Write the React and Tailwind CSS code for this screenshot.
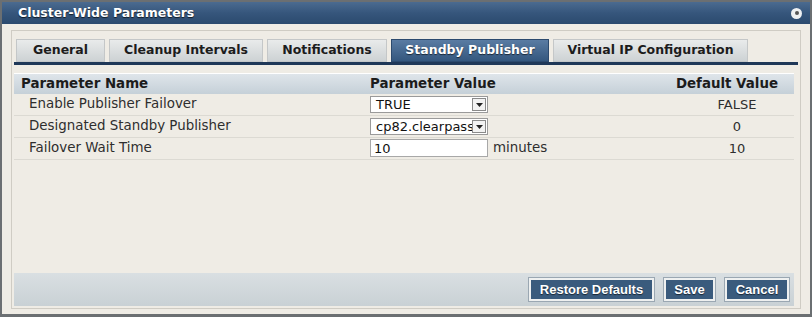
// Cluster-Wide Parameters dialog, Standby Publisher tab

const tabs = [
  { label: "General", w: "w-[89px]" },
  { label: "Cleanup Intervals", w: "w-[154px]" },
  { label: "Notifications", w: "w-[120px]" },
  { label: "Standby Publisher", w: "w-[158px]", active: true },
  { label: "Virtual IP Configuration", w: "w-[195px]" },
];

function SelectBox({ value }) {
  return (
    <div className="flex h-[17px] w-[118px] items-center border border-[#9a9a9a] bg-white">
      <span className="flex-1 overflow-hidden whitespace-nowrap pl-[5px] text-[13px] leading-[15px] text-[#111]">
        {value}
      </span>
      <span className="mr-[1px] flex h-[13px] w-[14px] shrink-0 items-center justify-center border border-[#8a8a8a] bg-[#f2f2f2]">
        <svg width="7" height="4" viewBox="0 0 7 4">
          <path d="M0 0h7L3.5 4z" fill="#222" />
        </svg>
      </span>
    </div>
  );
}

function Row({ name, children, def }) {
  return (
    <div className="flex h-[22px] items-center border-b border-[#dcdad3]">
      <div className="w-[356px] pl-[15px] text-[13.4px] text-[#2e2e2e]">{name}</div>
      <div className="flex w-[310px] items-center">{children}</div>
      <div className="flex-1 text-center text-[13px] text-[#2e2e2e]">{def}</div>
    </div>
  );
}

function DialogButton({ children, w }) {
  return (
    <button
      className={`h-[23px] ${w} border-2 border-[#eef0f0] bg-[#3a5b7d] text-[13px] font-bold text-white shadow-[0_0_0_1px_#9aa7b2] [font-family:'Liberation_Sans',sans-serif] [text-shadow:0_1px_1px_rgba(0,0,0,0.6)]`}
    >
      {children}
    </button>
  );
}

export default function App() {
  return (
    <div className="flex h-[317px] w-[812px] flex-col bg-[#6b6f72] px-[2px] pb-[3px] pt-[2px] [font-family:'DejaVu_Sans',Verdana,sans-serif]">
      {/* title bar */}
      <div className="flex h-[22px] items-center justify-between bg-gradient-to-b from-[#4b6b90] via-[#36567c] to-[#2b4a6e] pl-[16px] pr-[8px]">
        <span className="text-[12.5px] font-bold text-white [text-shadow:0_1px_1px_rgba(0,0,0,0.7)]">
          Cluster-Wide Parameters
        </span>
        <span className="flex h-[11px] w-[11px] items-center justify-center rounded-full bg-[#eef0f2]">
          <span className="h-[4px] w-[4px] rounded-full bg-[#555]" />
        </span>
      </div>

      {/* body */}
      <div className="flex flex-1 flex-col bg-[#efece5] px-[9px] pb-[5px] pt-[6px]">
        <div className="flex flex-1 flex-col border border-[#cfccc4] px-[2px] pt-[8px]">
          {/* tabs */}
          <div className="flex gap-[4px] border-b-[3px] border-[#1f3858] pl-[2px]">
            {tabs.map((t) => (
              <div
                key={t.label}
                className={`flex h-[23px] ${t.w} items-center justify-center border text-[12.5px] font-bold ${
                  t.active
                    ? "border-[#2c4a6e] bg-gradient-to-b from-[#5a7ca3] to-[#34577e] text-white [text-shadow:0_1px_1px_rgba(0,0,0,0.6)]"
                    : "border-[#c4c7c8] bg-gradient-to-b from-[#e9ebeb] to-[#cdd2d4] text-[#1c1c1c]"
                }`}
              >
                {t.label}
              </div>
            ))}
          </div>

          {/* table */}
          <div className="mt-[8px] pr-[4px]">
            <div className="flex h-[21px] items-center border-t border-white bg-gradient-to-b from-[#dfe5ea] to-[#c5d0d8] text-[13.4px] font-bold whitespace-nowrap text-[#1c1c1c]">
              <div className="w-[356px] pl-[7px]">Parameter Name</div>
              <div className="w-[290px]">Parameter Value</div>
              <div className="flex-1 pr-[16px] text-right">Default Value</div>
            </div>
            <Row name="Enable Publisher Failover" def="FALSE">
              <SelectBox value="TRUE" />
            </Row>
            <Row name="Designated Standby Publisher" def="0">
              <SelectBox value="cp82.clearpass" />
            </Row>
            <Row name="Failover Wait Time" def="10">
              <div className="flex h-[18px] w-[118px] items-center border border-[#a8a8a8] bg-white pl-[3px] text-[13px] text-[#111]">
                10
              </div>
              <span className="ml-[5px] text-[13.4px] text-[#2e2e2e]">minutes</span>
            </Row>
          </div>

          <div className="flex-1" />

          {/* footer */}
          <div className="mb-[2px] mr-[4px] flex h-[33px] items-center justify-end gap-[10px] bg-gradient-to-b from-[#d9dfe2] to-[#c9d1d5] pr-[5px]">
            <DialogButton w="w-[125px]">Restore Defaults</DialogButton>
            <DialogButton w="w-[51px]">Save</DialogButton>
            <DialogButton w="w-[64px]">Cancel</DialogButton>
          </div>
        </div>
      </div>
    </div>
  );
}
